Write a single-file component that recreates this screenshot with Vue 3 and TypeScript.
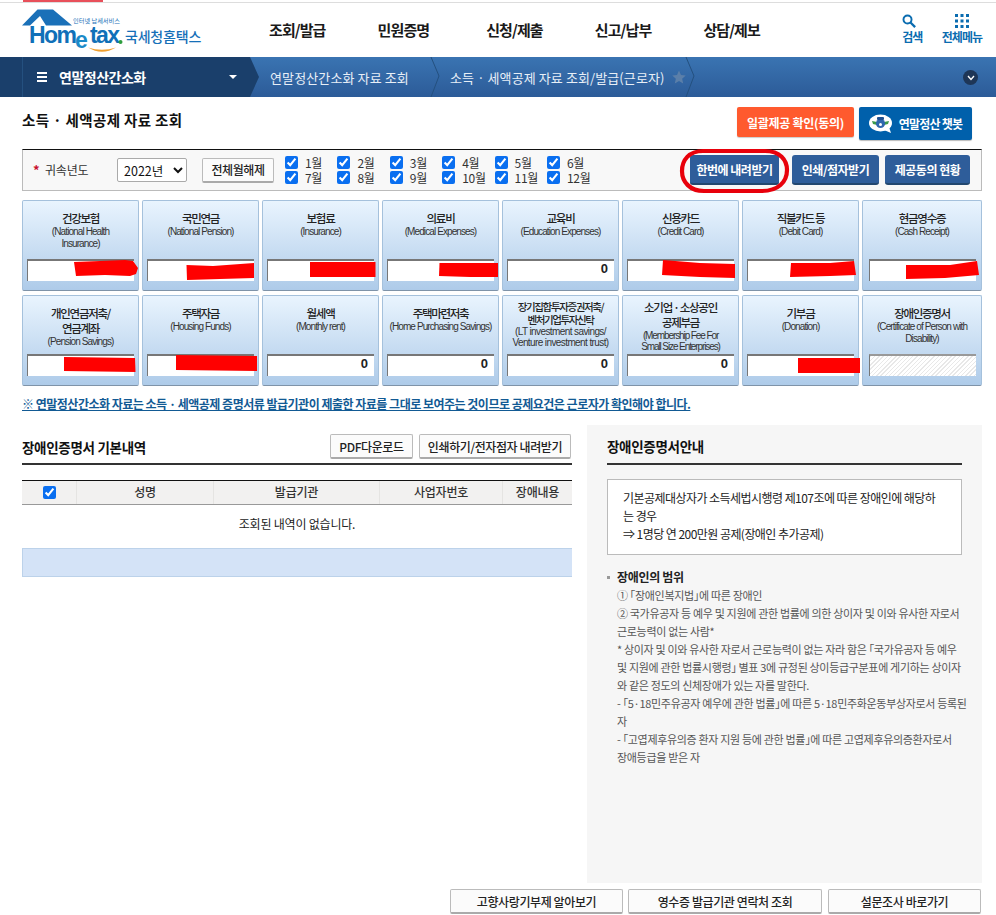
<script setup lang="ts">
interface Card { ko: string[]; en: string[]; value?: string; off?: boolean; fit?: string }
const navItems: string[] = ['조회/발급', '민원증명', '신청/제출', '신고/납부', '상담/제보']
const months: number[] = [1, 2, 3, 4, 5, 6, 7, 8, 9, 10, 11, 12]
const cards: Card[] = [
  { ko: ['건강보험'], en: ['(National Health', 'Insurance)'] },
  { ko: ['국민연금'], en: ['(National Pension)'] },
  { ko: ['보험료'], en: ['(Insurance)'] },
  { ko: ['의료비'], en: ['(Medical Expenses)'] },
  { ko: ['교육비'], en: ['(Education Expenses)'], value: '0' },
  { ko: ['신용카드'], en: ['(Credit Card)'] },
  { ko: ['직불카드 등'], en: ['(Debit Card)'] },
  { ko: ['현금영수증'], en: ['(Cash Receipt)'] },
  { ko: ['개인연금저축/', '연금계좌'], en: ['(Pension Savings)'] },
  { ko: ['주택자금'], en: ['(Housing Funds)'] },
  { ko: ['월세액'], en: ['(Monthly rent)'], value: '0' },
  { ko: ['주택마련저축'], en: ['(Home Purchasing Savings)'], value: '0' },
  { ko: ['장기집합투자증권저축/', '벤처기업투자신탁'], en: ['(LT investment savings/', 'Venture investment trust)'], value: '0', fit: 'dense' },
  { ko: ['소기업 · 소상공인', '공제부금'], en: ['(Membership Fee For', 'Small Size Enterprises)'], value: '0', fit: 'snug' },
  { ko: ['기부금'], en: ['(Donation)'] },
  { ko: ['장애인증명서'], en: ['(Certificate of Person with', 'Disability)'], off: true },
]
const columns: string[] = ['성명', '발급기관', '사업자번호', '장애내용']
const rangeLines: string[] = [
  '① 「장애인복지법」에 따른 장애인',
  '② 국가유공자 등 예우 및 지원에 관한 법률에 의한 상이자 및 이와 유사한 자로서',
  '근로능력이 없는 사람*',
  '* 상이자 및 이와 유사한 자로서 근로능력이 없는 자라 함은 「국가유공자 등 예우',
  '및 지원에 관한 법률시행령」 별표 3에 규정된 상이등급구분표에 게기하는 상이자',
  '와 같은 정도의 신체장애가 있는 자를 말한다.',
  '- 「5·18민주유공자 예우에 관한 법률」에 따른 5·18민주화운동부상자로서 등록된',
  '자',
  '- 「고엽제후유의증 환자 지원 등에 관한 법률」에 따른 고엽제후유의증환자로서',
  '장애등급을 받은 자',
]
const redactions: string[] = [
  '74,262 100,261 125,260 133,261 138,268 136,274 130,276 105,275 76,276',
  '186.5,265 213,266 254,263 254,278 220,279 187,280',
  '310,262 375.5,262 375.5,277 310,277',
  '439.5,263 498,263 498,277 470,277 439,276',
  '663,260 700,263 735,264 735,278 700,277 662,275',
  '791,263 830,263 854,261 856,275 830,276 790,277',
  '906,265 950,265 977,261 979,275 945,278 906,279',
  '64,357 135,358 135.5,372 64,371',
  '176,355 257,356 257,371 176,370',
  '798,358 860,358 860,373 798,373',
]
</script>

<template>
  <div class="page">
    <div class="topline"><span class="topline-red"></span></div>

    <header class="header">
      <div class="logo">
        <svg class="logo-mark" viewBox="0 0 104 44" width="104" height="44">
          <path d="M0 16.5 L15.5 0.5 H31 L50 16.5 H24 L18 7 L8 16.5 Z" fill="#1a70b8" />
          <text x="7" y="33.5" class="lg-home">Hom</text>
          <text x="53" y="38.5" class="lg-e">e</text>
          <text x="68" y="33.5" class="lg-home">tax</text>
          <circle cx="98.5" cy="33" r="2" fill="#2e9e3f" />
          <path d="M66 38.5 Q80 47 94 38.5 Q80 43 66 38.5 Z" fill="#f0a030" />
          <text x="51" y="14" class="lg-small">인터넷 납세서비스</text>
        </svg>
        <span class="logo-name">국세청홈택스</span>
      </div>
      <nav class="gnb">
        <a v-for="item in navItems" :key="item" class="gnb-item">{{ item }}</a>
      </nav>
      <div class="util">
        <div class="util-item search">
          <svg width="14" height="14" viewBox="0 0 16 16"><circle cx="6.3" cy="6.3" r="4.6" fill="none" stroke="#0a6cb0" stroke-width="2.2" /><path d="M9.7 9.7 L15 15" stroke="#0a6cb0" stroke-width="2.6" /></svg>
          <span>검색</span>
        </div>
        <div class="util-item">
          <svg width="14" height="14" viewBox="0 0 14 14" fill="#0a6cb0">
            <rect x="0" y="0" width="3" height="3" /><rect x="5.5" y="0" width="3" height="3" /><rect x="11" y="0" width="3" height="3" />
            <rect x="0" y="5.5" width="3" height="3" /><rect x="5.5" y="5.5" width="3" height="3" /><rect x="11" y="5.5" width="3" height="3" />
            <rect x="0" y="11" width="3" height="3" /><rect x="5.5" y="11" width="3" height="3" /><rect x="11" y="11" width="3" height="3" />
          </svg>
          <span>전체메뉴</span>
        </div>
      </div>
    </header>

    <div class="crumbbar">
      <div class="crumb-main">
        <span class="burger"><i></i><i></i><i></i></span>
        <span class="crumb-title">연말정산간소화</span>
        <span class="caret"></span>
      </div>
      <div class="crumb crumb-a">
        연말정산간소화 자료 조회
        <svg class="chev" width="10" height="40" viewBox="0 0 10 40"><path d="M1 0 L9 19 L1 40" fill="none" stroke="#24507f" /></svg>
      </div>
      <div class="crumb crumb-b">
        소득 · 세액공제 자료 조회/발급(근로자)
        <svg class="star" width="14" height="14" viewBox="0 0 24 24"><path d="M12 1 L15.4 8.6 L23.5 9.4 L17.4 14.9 L19.2 23 L12 18.8 L4.8 23 L6.6 14.9 L0.5 9.4 L8.6 8.6 Z" fill="#5b7fa9" /></svg>
        <svg class="chev" width="10" height="40" viewBox="0 0 10 40"><path d="M1 0 L9 19 L1 40" fill="none" stroke="#24507f" /></svg>
      </div>
      <span class="crumb-toggle">
        <svg width="8" height="6" viewBox="0 0 8 6"><path d="M1 1 L4 4.5 L7 1" fill="none" stroke="#fff" stroke-width="1.3" /></svg>
      </span>
    </div>

    <main class="content">
      <div class="titlerow">
        <h1 class="pagetitle">소득 · 세액공제 자료 조회</h1>
        <div class="titlebtns">
          <button class="btn-orange">일괄제공 확인(동의)</button>
          <button class="btn-chat">
            <svg width="24" height="20" viewBox="0 0 24 20">
              <ellipse cx="11.5" cy="9" rx="11.5" ry="8.5" fill="#fff" />
              <path d="M15 16 L22 19 L20 13 Z" fill="#fff" />
              <path d="M3 7 L8 8 L8 11 L4 10 Z M20 7 L15 8 L15 11 L19 10 Z" fill="#3a9a4a" />
              <circle cx="11.5" cy="9.5" r="4.6" fill="#2f67ad" />
              <rect x="8" y="3" width="7" height="3" rx="1" fill="#1d4f90" />
              <circle cx="11.5" cy="10.5" r="1.5" fill="#fff" />
            </svg>
            <span>연말정산 챗봇</span>
          </button>
        </div>
      </div>

      <section class="filter">
        <span class="req">*</span>
        <span class="filter-label">귀속년도</span>
        <select class="year"><option>2022년</option></select>
        <button class="btn-gray btn-clear">전체월해제</button>
        <div class="months">
          <label v-for="m in months" :key="m" class="month">
            <input type="checkbox" checked />
            <span>{{ m }}월</span>
          </label>
        </div>
        <div class="filter-actions">
          <button class="btn-blue b1">한번에 내려받기</button>
          <button class="btn-blue b2">인쇄/점자받기</button>
          <button class="btn-blue b3">제공동의 현황</button>
        </div>
      </section>

      <section class="cards">
        <article v-for="c in cards" :key="c.ko[0]" class="card" :class="c.fit">
          <div class="card-ko"><div v-for="l in c.ko" :key="l">{{ l }}</div></div>
          <div class="card-en"><div v-for="l in c.en" :key="l">{{ l }}</div></div>
          <div class="card-val" :class="{ off: c.off }">{{ c.value }}</div>
        </article>
      </section>

      <p class="notice">※ 연말정산간소화 자료는 소득 · 세액공제 증명서류 발급기관이 제출한 자료를 그대로 보여주는 것이므로 공제요건은 근로자가 확인해야 합니다.</p>

      <div class="columns">
        <section class="left">
          <div class="left-head">
            <h2 class="sec-title">장애인증명서 기본내역</h2>
            <div class="left-btns">
              <button class="btn-gray pdf">PDF다운로드</button>
              <button class="btn-gray print">인쇄하기/전자점자 내려받기</button>
            </div>
          </div>
          <div class="table">
            <div class="thead">
              <div class="th th-check"><input type="checkbox" checked /></div>
              <div v-for="col in columns" :key="col" class="th">{{ col }}</div>
            </div>
            <div class="empty">조회된 내역이 없습니다.</div>
            <div class="band"></div>
          </div>
        </section>

        <aside class="guide">
          <h2 class="guide-title">장애인증명서안내</h2>
          <div class="guide-box">
            <p>기본공제대상자가 소득세법시행령 제107조에 따른 장애인에 해당하는 경우</p>
            <p>⇒ 1명당 연 200만원 공제(장애인 추가공제)</p>
          </div>
          <div class="range">
            <h3 class="range-title">장애인의 범위</h3>
            <p v-for="l in rangeLines" :key="l">{{ l }}</p>
          </div>
        </aside>
      </div>

      <div class="footer-btns">
        <button class="btn-gray f1">고향사랑기부제 알아보기</button>
        <button class="btn-gray f2">영수증 발급기관 연락처 조회</button>
        <button class="btn-gray f3">설문조사 바로가기</button>
      </div>
    </main>

    <svg class="marks" width="996" height="915" viewBox="0 0 996 915">
      <polygon v-for="p in redactions" :key="p" :points="p" fill="#ff0000" />
      <path d="M703 151 H765 C780 151 787 160 787 170 C787 182 778 191 762 191 H704 C690 191 682 182 682 171 C682 160 689 151 703 151 Z" fill="none" stroke="#e8000b" stroke-width="4.2" />
    </svg>
  </div>
</template>

<style>
html, body { margin: 0; background: #fff; }
</style>

<style scoped>
* { box-sizing: border-box; }
.page {
  position: relative;
  width: 996px;
  height: 915px;
  overflow: hidden;
  background: #fff;
  font-family: "Noto Sans CJK KR", "Liberation Sans", sans-serif;
  color: #222;
  font-size: 12px;
}
button { font-family: inherit; cursor: pointer; padding: 0; }
p, h1, h2, h3 { margin: 0; }

.topline { height: 3px; border-bottom: 1px solid #ddd; padding-left: 23px; }
.topline-red { display: block; width: 80px; height: 2px; background: #e8505a; }

.header { height: 54px; display: flex; align-items: center; padding-left: 22px; position: relative; }
.logo { display: flex; align-items: flex-end; width: 186px; height: 44px; margin-top: 1px; }
.logo-mark { flex: none; }
.lg-home { font: bold 23px "Liberation Sans", sans-serif; fill: #1070b8; letter-spacing: -1.6px; }
.lg-e { font: bold 23px "Liberation Sans", sans-serif; fill: #1a8ac8; }
.lg-small { font: 6.2px "Noto Sans CJK KR", sans-serif; fill: #1a70b8; }
.logo-name { margin-left: -1px; margin-bottom: 8px; font-size: 14px; line-height: 18px; font-weight: 500; color: #1670b8; letter-spacing: -0.2px; white-space: nowrap; }
.gnb { display: flex; margin-left: 61px; margin-top: -1px; }
.gnb-item { width: 108.6px; font-size: 15px; line-height: 22px; font-weight: 700; color: #1a1a1a; letter-spacing: -0.9px; white-space: nowrap; }
.util { margin-left: auto; display: flex; gap: 19px; padding-right: 14px; margin-top: -2px; }
.util-item { display: flex; flex-direction: column; align-items: center; gap: 1px; color: #0a6cb0; font-size: 12px; line-height: 16px; font-weight: 700; letter-spacing: -1px; }
.util-item svg { height: 14px; }
.search svg { margin-right: 7px; }

.crumbbar { height: 40px; display: flex; align-items: center; background: linear-gradient(#3a74b2, #2c5b98); color: #e8eff7; position: relative; }
.crumb-main {
  width: 259px; height: 40px; flex: none; display: flex; align-items: center; padding-left: 37px;
  background: linear-gradient(90deg, #1a3f6b 22px, #24507f 22px, #24507f 23px, #1a3f6b 23px);
  clip-path: polygon(0 0, 250px 0, 259px 50%, 250px 100%, 0 100%);
  color: #fff;
}
.burger { width: 10px; display: flex; flex-direction: column; gap: 2px; margin-right: 12px; }
.burger i { display: block; height: 2px; background: #fff; }
.crumb-title { font-size: 14px; line-height: 20px; font-weight: 700; letter-spacing: -0.5px; }
.caret { width: 0; height: 0; border: 4px solid transparent; border-top: 4px solid #fff; border-bottom: 0; margin-left: 83px; }
.crumb { position: relative; height: 40px; display: flex; align-items: center; font-size: 13px; letter-spacing: 0.12px; white-space: nowrap; flex: none; }
.crumb-a { width: 181px; padding-left: 11px; }
.crumb-b { width: 255px; padding-left: 10px; letter-spacing: 0.1px; }
.chev { position: absolute; right: 0; top: 0; }
.star { position: absolute; left: 232px; top: 13px; }
.crumb-toggle { position: absolute; right: 18px; top: 13px; width: 15px; height: 15px; border-radius: 50%; background: #1e3657; display: flex; align-items: center; justify-content: center; }

.content { padding: 0 14px 0 22px; }
.titlerow { height: 52px; display: flex; justify-content: space-between; align-items: flex-start; }
.pagetitle { margin-top: 13px; font-size: 14.5px; line-height: 20px; font-weight: 700; color: #111; letter-spacing: 0.35px; }
.titlebtns { display: flex; gap: 5px; padding-top: 10px; padding-right: 10px; }
.btn-orange { width: 117px; height: 30px; border: 0; border-radius: 2px; background: #ff5a2e; color: #fff; font-size: 12px; font-weight: 700; letter-spacing: -0.3px; box-shadow: 0 1px 1px #ccc; }
.btn-chat { width: 113px; height: 33px; border: 0; border-radius: 2px; background: #0060ab; color: #fff; font-size: 12px; font-weight: 700; letter-spacing: -0.8px; display: flex; align-items: center; justify-content: center; gap: 6px; box-shadow: 0 1px 1px #bbb; }

.filter { height: 42px; display: flex; align-items: center; padding-left: 10px; background: #f8f8f8; border: 1px solid #bbb; border-top: 1px solid #111; position: relative; }
.req { color: #c8102e; font-weight: 700; font-size: 13px; width: 12px; line-height: 12px; }
.filter-label { width: 72px; font-size: 12px; line-height: 16px; color: #333; letter-spacing: -0.2px; }
.year { width: 70px; height: 24px; font: 12.5px "Noto Sans CJK KR", sans-serif; border: 1px solid #aaa; border-radius: 2px; background: #fff; color: #111; padding-left: 2px; }
.btn-gray { background: #fbfbfb; border: 1px solid #bbb; border-bottom: 2px solid #aaa; border-radius: 2px; color: #222; font-size: 12px; font-weight: 500; letter-spacing: -0.4px; white-space: nowrap; }
.btn-clear { width: 72px; height: 25px; margin-left: 15px; }
.months { display: grid; grid-template-columns: repeat(6, 52.4px); grid-auto-rows: 15.5px; margin-left: 11px; }
.month { display: flex; align-items: center; font-size: 12px; line-height: 15px; color: #333; letter-spacing: -0.3px; }
input[type="checkbox"] { width: 13px; height: 13px; margin: 0; accent-color: #0a6ff0; flex: none; }
.month span { margin-left: 7px; }
.filter-actions { position: absolute; left: 667px; top: 5px; display: flex; }
.btn-blue { height: 30px; border: 0; border-bottom: 2px solid #22476f; border-radius: 3px; background: #2e5d9a; color: #fff; font-size: 12px; font-weight: 700; letter-spacing: -0.5px; }
.b1 { width: 89px; }
.b2 { width: 87px; margin-left: 13px; }
.b3 { width: 85px; margin-left: 6px; }

.cards { margin-top: 9px; display: grid; grid-template-columns: repeat(7, 117px) 120px; gap: 4px 3px; grid-auto-rows: 91px; }
.card {
  display: flex; flex-direction: column; align-items: center; padding: 10px 5px 9px;
  background: linear-gradient(#e9f4fe, #aecbe9);
  border: 1px solid #a5c1dc; border-bottom: 1px solid #7f93a8; border-radius: 2px; text-align: center;
}
.card-ko { font-size: 11.5px; line-height: 15px; font-weight: 500; color: #222; letter-spacing: -1.3px; white-space: nowrap; }
.card-en { font: 10px/12px "Liberation Sans", sans-serif; color: #333; letter-spacing: -0.9px; white-space: nowrap; }
.card.dense { padding-top: 5px; }
.card.dense .card-ko { font-size: 10.5px; line-height: 12.5px; letter-spacing: -1.4px; }
.card.dense .card-en { line-height: 11px; letter-spacing: -0.6px; }
.card.snug { padding-top: 4px; }
.card.snug .card-en { line-height: 11px; letter-spacing: -1.1px; }
.card-val {
  margin-top: auto; width: 107px; height: 22px; flex: none; background: #fff;
  border-top: 2px solid #777; border-left: 1px solid #777;
  text-align: right; padding-right: 6px; font: bold 13px/16px "Liberation Sans", sans-serif; color: #222;
}
.card-val.off { background: repeating-linear-gradient(-45deg, #fff 0 1px, #e8e8e8 1px 2px, #fff 2px 3px); border-top-color: #999; }

.notice { margin-top: 9px; height: 18px; font-size: 12px; line-height: 18px; font-weight: 700; color: #125a94; text-decoration: underline; letter-spacing: -0.5px; white-space: nowrap; }

.columns { margin-top: 12px; display: flex; gap: 15px; }
.left { width: 550px; flex: none; }
.left-head { height: 40px; padding-top: 9px; display: flex; justify-content: space-between; align-items: flex-start; border-bottom: 2px solid #333; }
.sec-title { margin-top: 4px; font-size: 13.5px; line-height: 18px; font-weight: 700; color: #111; letter-spacing: -0.3px; }
.left-btns { display: flex; gap: 6px; padding-right: 1px; }
.pdf { width: 83px; height: 25px; }
.print { width: 152px; height: 25px; }
.table { margin-top: 15px; }
.thead { display: grid; grid-template-columns: 54px 137px 166px 123px 70px; height: 25px; background: #f2f1f0; border-top: 1px solid #111; border-bottom: 1px solid #999; }
.th { display: flex; align-items: center; justify-content: center; padding-bottom: 1px; border-left: 1px solid #e5e4e2; font-size: 12px; line-height: 16px; font-weight: 500; color: #333; letter-spacing: -0.2px; }
.th-check { border-left: 0; }
.empty { height: 43px; padding-bottom: 7px; display: flex; align-items: center; justify-content: center; font-size: 12px; color: #222; letter-spacing: -0.2px; }
.band { height: 29px; background: #d4e3f7; border: 1px solid #bcd2ea; border-right: 0; }

.guide { width: 395px; height: 458px; flex: none; background: #f6f6f6; padding: 0 20px; }
.guide-title { height: 40px; padding-top: 12px; border-bottom: 2px solid #333; font-size: 13.5px; line-height: 18px; font-weight: 700; color: #111; letter-spacing: -0.3px; }
.guide-box { margin-top: 14px; height: 76px; background: #fff; border: 1px solid #bbb; padding: 9px 20px 9px 15px; font-size: 12px; line-height: 18px; color: #222; letter-spacing: -0.55px; }
.range { margin-top: 13px; padding-left: 10px; position: relative; font-size: 11px; line-height: 18px; color: #555; letter-spacing: -0.32px; font-feature-settings: "halt"; white-space: nowrap; }
.range::before { content: ""; position: absolute; left: 0; top: 8px; width: 3px; height: 3px; background: #999; }
.range-title { font-size: 12px; line-height: 18px; font-weight: 700; color: #222; }

.footer-btns { margin-top: 6px; display: flex; justify-content: flex-end; gap: 5px; padding-right: 1px; }
.f1 { width: 173px; height: 25px; }
.f2 { width: 194px; height: 25px; margin-right: 1px; }
.f3 { width: 153px; height: 25px; }

.marks { position: absolute; left: 0; top: 0; pointer-events: none; }
</style>
